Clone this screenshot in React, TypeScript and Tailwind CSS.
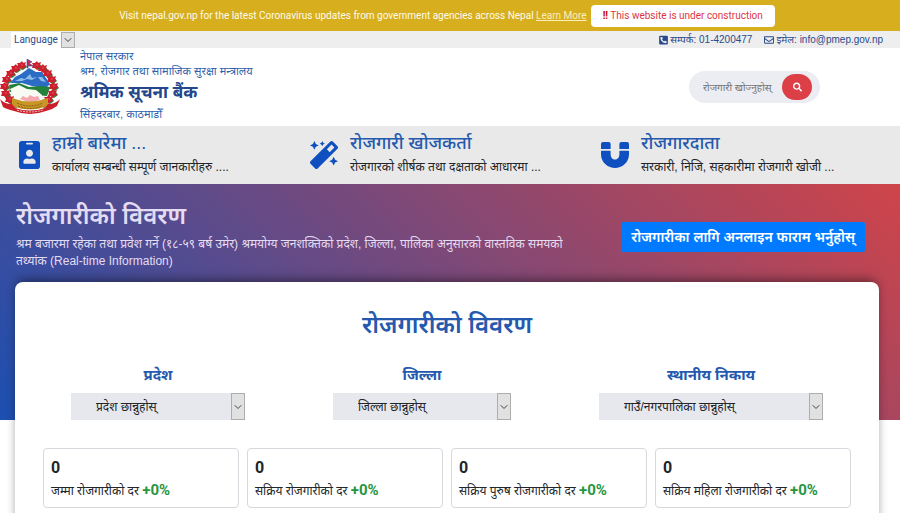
import { FaIdBadge, FaMagic, FaMagnet, FaPhoneSquareAlt, FaRegEnvelope, FaSearch } from 'react-icons/fa';
import { ChevronDown } from 'lucide-react';

const features = [
  { icon: FaIdBadge, size: 'w-[21px]', title: 'हाम्रो बारेमा ...', text: 'कार्यालय सम्बन्धी सम्पूर्ण जानकारीहरु ....' },
  { icon: FaMagic, size: 'w-7', title: 'रोजगारी खोजकर्ता', text: 'रोजगारको शीर्षक तथा दक्षताको आधारमा ...' },
  { icon: FaMagnet, size: 'w-7', title: 'रोजगारदाता', text: 'सरकारी, निजि, सहकारीमा रोजगारी खोजी ...' },
];

const filters = [
  { id: 'province', label: 'प्रदेश', option: 'प्रदेश छान्नुहोस्', width: 'w-[174px]' },
  { id: 'district', label: 'जिल्ला', option: 'जिल्ला छान्नुहोस्', width: 'w-[178px]' },
  { id: 'local', label: 'स्थानीय निकाय', option: 'गाउँ/नगरपालिका छान्नुहोस्', width: 'w-[224px]' },
];

const stats = [
  { label: 'जम्मा रोजगारीको दर', value: 0 },
  { label: 'सक्रिय रोजगारीको दर', value: 0 },
  { label: 'सक्रिय पुरुष रोजगारीको दर', value: 0 },
  { label: 'सक्रिय महिला रोजगारीको दर', value: 0 },
];

// rhododendron garland: [x, y] of each flower
const flowers = [
  [22, 6], [16, 9], [11, 14], [7, 20], [5, 27], [6, 34], [10, 40], [15, 44],
  [37, 6], [43, 9], [48, 14], [52, 20], [54, 27], [53, 34], [49, 40], [44, 44],
];

function Emblem() {
  return (
    <svg viewBox="0 0 60 56" className="w-[60px] h-14 mt-1 shrink-0" role="img" aria-label="नेपाल सरकार">
      <ellipse cx="30" cy="28" rx="23" ry="20" fill="#f4f8fb" />
      <path d="M10 24 L15 18 L21 15 L29 9 L36 13 L42 13 L50 25 L46 29 L32 27 L22 24 Z" fill="#2b6cc4" />
      <path d="M15 22l6-3 4 1 5-5 2 4 5-1-5 3-5-1-5 2z M38 18l3 4 5 1-4-5z" fill="#8fbbe8" />
      <path d="M9 26 L19 24 L29 28 L40 27 L50 28 L47 37 L34 36 L20 30 L10 33 Z" fill="#23813a" />
      <path d="M10 30 L19 26 L27 30 L36 31 L42 36 L42 42 L17 42 Z" fill="#f8fbf4" />
      <path d="M20 40l3-3 4 2 3-3 4 2 4-1 2 4-9 3z" fill="#f3a9ad" />
      <g fill="#2f7a33">
        {flowers.map(([x, y]) => (
          <path key={`${x}-${y}`} d={`M${x - 4} ${y + 2}l3-5 3 1 3 4-4 3z`} />
        ))}
      </g>
      {flowers.map(([x, y]) => (
        <g key={`${x}-${y}`}>
          <path d={`M${x} ${y - 4}l1 2 3-1-1 3 1 2-3 1-1 2-2-2-3 0 1-3-1-2 3 0z`} fill="#cf1f2e" />
          <circle cx={x} cy={y} r="1" fill="#dd4450" />
        </g>
      ))}
      <path d="M27 0l5 3-3 1 4 3h-5v2h-1z" fill="#c8264a" stroke="#38459c" strokeWidth="0.6" />
      <path d="M12 39 Q30 46 48 39 L48 47 Q30 54 12 47 Z" fill="#c99625" />
      <path d="M17 44q13 6 26 0M18 47q12 5 24 0" fill="none" stroke="#7e5a18" strokeWidth="1" strokeDasharray="2 1" />
      <path d="M0 40 Q4 45 12 45 L15 49 Q30 54 45 49 L48 45 Q56 45 60 40 L57 47 Q52 51 46 52 Q30 58 14 52 Q6 50 3 48 Z" fill="#cb1f2c" />
      <path d="M17 51q13 4 26 0" fill="none" stroke="#f3c8c0" strokeWidth="1" strokeDasharray="2 1" />
    </svg>
  );
}

function SelectArrow() {
  return (
    <span className="pointer-events-none absolute inset-y-0 right-0 w-[14px] flex items-center justify-center border border-[#adadad] bg-[#e1e1e1]">
      <ChevronDown className="w-3 h-3 shrink-0 text-[#444]" />
    </span>
  );
}

export default function App() {
  return (
    <div className="min-h-screen overflow-hidden bg-white text-[#212529] font-['Liberation_Sans','Noto_Sans','Noto_Sans_Devanagari',sans-serif]">
      {/* Notice */}
      <div className="flex items-center justify-center pr-1.5 h-[31px] bg-[#d7ae1e] text-[#fffbe8] text-[10px] font-['Roboto',sans-serif]">
        <p>
          Visit nepal.gov.np for the latest Coronavirus updates from government agencies across Nepal{' '}
          <a href="#" className="underline text-[#fbeeb8]">Learn More</a>
        </p>
        <p className="ml-1 px-3 h-[22px] leading-[22px] rounded bg-white text-[#dc3545]">
          <b className="text-[#c40000]">!!</b> This website is under construction
        </p>
      </div>

      {/* Top bar */}
      <div className="flex items-center justify-between h-[17px] pl-[11px] pr-[17px] bg-[#eee] text-[#2b4a8b] text-[10px]">
        <div className="relative">
          <select
            aria-label="Language"
            className="block appearance-none w-16 h-4 pl-[3px] bg-white text-[10px] leading-4 font-['Roboto',sans-serif]"
          >
            <option>Language</option>
          </select>
          <SelectArrow />
        </div>
        <div className="flex items-center gap-3 leading-4">
          <span className="flex items-center gap-0.5"><FaPhoneSquareAlt className="w-[9px]" /> सम्पर्क: 01-4200477</span>
          <span className="flex items-center gap-0.5"><FaRegEnvelope className="w-[10px]" /> इमेल: info@pmep.gov.np</span>
        </div>
      </div>

      {/* Header */}
      <header className="flex items-center justify-between h-[78px] pr-20 pb-1">
        <div className="flex items-center gap-5">
          <Emblem />
          <div className="text-[#2d5fae] text-[11px] leading-[15px]">
            <p>नेपाल सरकार</p>
            <p>श्रम, रोजगार तथा सामाजिक सुरक्षा मन्त्रालय</p>
            <h1 className="text-[17px] leading-7 font-bold text-[#24468a]">श्रमिक सूचना बैंक</h1>
            <p>सिंहदरबार, काठमाडौँ</p>
          </div>
        </div>
        <form className="flex items-center w-[131px] h-8 mt-1 pl-[14px] pr-2 rounded-full bg-[#ececf3]">
          <input
            type="text"
            aria-label="रोजगारी खोज्नुहोस्"
            placeholder="रोजगारी खोज्नुहोस्"
            className="min-w-0 flex-1 h-6 text-[10px] bg-transparent outline-none placeholder:text-[#757575]"
          />
          <button type="button" aria-label="Search" className="flex items-center justify-center w-[30px] h-[26px] rounded-full bg-[#dc3f45] text-white">
            <FaSearch className="w-[9px]" />
          </button>
        </form>
      </header>

      {/* Features */}
      <section className="grid grid-cols-[291px_291px_1fr] h-[58px] pl-[19px] bg-[#e9e9e9]">
        {features.map(({ icon: Icon, size, title, text }) => (
          <div key={title} className="flex items-center gap-3">
            <Icon className={`${size} h-7 shrink-0 text-[#0f4fc0]`} />
            <div className="pb-1 whitespace-nowrap">
              <h2 className="text-lg leading-7 font-medium text-[#2459ae]">{title}</h2>
              <p className="text-xs leading-5">{text}</p>
            </div>
          </div>
        ))}
      </section>

      {/* Hero */}
      <section className="h-[236px] pt-4 pl-4 pr-[35px] bg-[linear-gradient(45deg,#1c4fb0,#cf4449)] text-[#e4dcf2]">
        <div className="flex items-center justify-between">
          <div>
            <h2 className="text-2xl leading-8 font-semibold">रोजगारीको विवरण</h2>
            <p className="max-w-[560px] text-xs leading-[17px] mt-1">
              श्रम बजारमा रहेका तथा प्रवेश गर्ने (१८-५९ बर्ष उमेर) श्रमयोग्य जनशक्तिको प्रदेश, जिल्ला, पालिका अनुसारको वास्तविक समयको तथ्यांक (Real-time Information)
            </p>
          </div>
          <button type="button" className="h-[30px] px-[10px] mt-1 shrink-0 whitespace-nowrap rounded-xs bg-[#007bff] text-white text-sm font-semibold">
            रोजगारीका लागि अनलाइन फाराम भर्नुहोस्
          </button>
        </div>
      </section>

      {/* Employment details */}
      <main className="relative -mt-[138px] ml-[15px] mr-[21px] px-7 pt-[25px] pb-7 rounded-lg bg-white shadow-[0_-6px_12px_-4px_rgba(0,0,0,0.4),0_0_8px_rgba(0,0,0,0.15)]">
        <h2 className="text-center text-2xl leading-9 font-semibold text-[#2459ae]">रोजगारीको विवरण</h2>
        <div className="flex justify-between mt-5 px-7">
          {filters.map((f) => (
            <div key={f.id} className={f.width}>
              <label htmlFor={f.id} className="block text-center text-[15px] leading-6 mb-1.5 font-bold text-[#2459ae]">
                {f.label}
              </label>
              <div className="relative">
                <select id={f.id} className="block appearance-none w-full h-[27px] pl-[25px] bg-[#e7e8ed] text-xs">
                  <option>{f.option}</option>
                </select>
                <SelectArrow />
              </div>
            </div>
          ))}
        </div>
        <div className="grid grid-cols-4 gap-2 mt-7">
          {stats.map((s) => (
            <div key={s.label} className="h-[60px] px-[7px] pt-2 border border-[#d5d8dc] rounded whitespace-nowrap">
              <p className="text-base leading-[22px] font-bold font-['Roboto',sans-serif]">{s.value}</p>
              <p className="text-xs leading-[22px]">
                {s.label} <span className="text-[15px] font-bold text-[#28963f] font-['Roboto',sans-serif]">+0%</span>
              </p>
            </div>
          ))}
        </div>
      </main>
    </div>
  );
}
